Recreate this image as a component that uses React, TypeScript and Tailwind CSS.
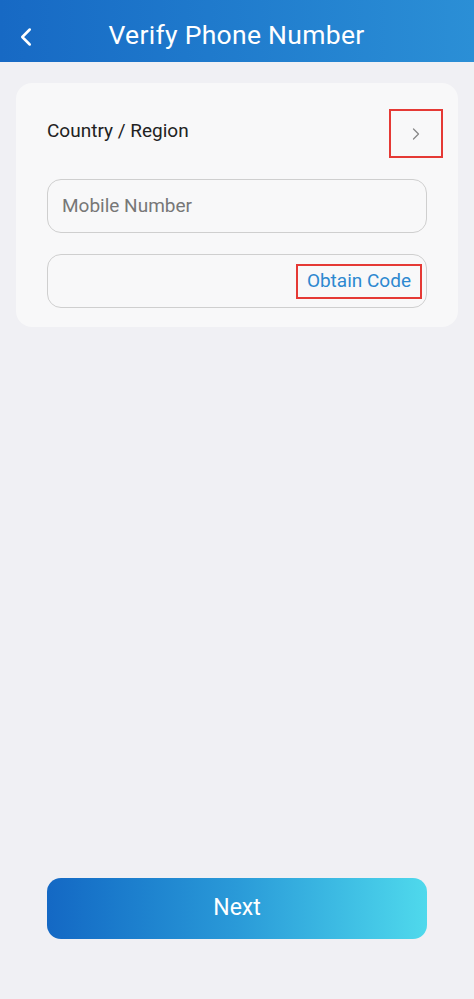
import { ChevronLeft, ChevronRight } from "lucide-react";

export default function App() {
  return (
    <div className="flex h-[999px] w-[474px] flex-col bg-[#f0f0f4] font-['Roboto',sans-serif]">
      {/* Header */}
      <div className="relative flex h-[62px] shrink-0 items-center justify-center bg-gradient-to-r from-[#1769c4] to-[#2b8fd6] pt-[8px]">
        <ChevronLeft className="absolute left-[11px] top-[22px] h-[30px] w-[30px] text-white" strokeWidth={2} />
        <h1 className="ml-[-1px] text-[26.5px] font-normal tracking-[0.3px] text-white">Verify Phone Number</h1>
      </div>

      {/* Card */}
      <div className="mx-[16px] mt-[21px] flex flex-col rounded-[16px] bg-[#f8f8f9] px-[31px] pb-[19px] pt-[26px]">
        <div className="flex items-center justify-between">
          <span className="mt-[-4px] text-[19px] text-[#222]">Country / Region</span>
          <div className="mr-[-16px] flex h-[49px] w-[54px] items-center justify-center border-2 border-[#e53935]">
            <ChevronRight className="h-[20px] w-[20px] text-[#888]" strokeWidth={1.5} />
          </div>
        </div>
        <div className="mt-[21px] flex h-[54px] items-center rounded-[14px] border border-[#cfcfcf] px-[14px]">
          <input
            placeholder="Mobile Number"
            className="w-full bg-transparent text-[19px] text-[#222] outline-none placeholder:text-[#777]"
          />
        </div>
        <div className="mt-[21px] flex h-[54px] items-center justify-end rounded-[14px] border border-[#cfcfcf] pr-[4px]">
          <div className="flex h-[35px] items-center border-2 border-[#e53935] px-[9px]">
            <span className="text-[19px] text-[#2d88d0]">Obtain Code</span>
          </div>
        </div>
      </div>

      <div className="flex-1" />

      {/* Next button */}
      <div className="px-[47px] pb-[60px]">
        <button className="flex h-[61px] w-full items-center justify-center rounded-[14px] bg-gradient-to-r from-[#1468c4] via-[#2a9ad8] to-[#4fd9ec] text-[23px] text-white">
          Next
        </button>
      </div>
    </div>
  );
}
